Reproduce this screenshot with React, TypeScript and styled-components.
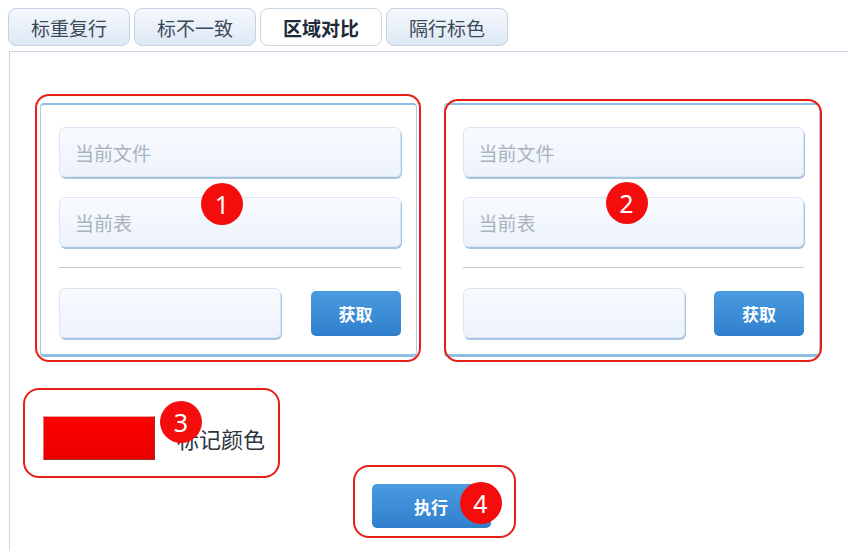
import * as React from 'react';
import styled, { createGlobalStyle } from 'styled-components';

const GlobalStyle = createGlobalStyle`
  html, body {
    margin: 0;
    padding: 0;
    overflow: hidden;
    background: #fff;
    font-family: "Noto Sans CJK SC", "Noto Sans", sans-serif;
  }
`;

const Page = styled.div`
  padding-top: 8px;
  height: 551px;
  box-sizing: border-box;
`;

const TabBar = styled.div`
  display: flex;
  gap: 4px;
  padding-left: 8px;
`;

const Tab = styled.div<{ $active?: boolean }>`
  width: 122px;
  height: 38px;
  box-sizing: border-box;
  display: flex;
  align-items: center;
  justify-content: center;
  border: 1px solid ${(p) => (p.$active ? '#cad8e6' : '#c3d3e5')};
  border-radius: 8px;
  background: ${(p) => (p.$active ? '#fff' : 'linear-gradient(180deg, #f5f8fc 0%, #dde8f4 100%)')};
  color: ${(p) => (p.$active ? '#1e2a38' : '#3b4a5a')};
  font-size: 19px;
  font-weight: ${(p) => (p.$active ? 700 : 400)};
`;

const Panel = styled.div`
  margin: 5px 0 0 9px;
  width: 844px;
  height: 520px;
  box-sizing: border-box;
  border: 1px solid #c8d6e6;
  padding: 51px 32px 0 30px;
`;

const CardRow = styled.div`
  display: flex;
  gap: 27px;
`;

const Card = styled.div`
  position: relative;
  flex: 1;
  background: #fff;
  border: 1px solid #a9cbe8;
  border-top: 2px solid #8fbde3;
  border-bottom: 3px solid #8fbde3;
  border-radius: 4px;
  padding: 22px 15px 16px 18px;
`;

const Stack = styled.div`
  display: flex;
  flex-direction: column;
  gap: 20px;
`;

const Field = styled.input<{ $width?: number }>`
  width: ${(p) => (p.$width ? `${p.$width}px` : '100%')};
  height: 50px;
  box-sizing: border-box;
  border: 1px solid #dce6f3;
  border-radius: 6px;
  background: linear-gradient(180deg, #f8fafe 0%, #edf3fc 100%);
  box-shadow: 1px 2px 0 #a8c4e3;
  padding: 0 15px;
  font-family: inherit;
  font-size: 19px;
  color: #333;
  outline: none;

  &::placeholder {
    color: #a9b3bd;
  }
`;

const Divider = styled.div`
  height: 1px;
  background: #c9c9c9;
  margin: 20px 0;
`;

const BottomRow = styled.div`
  display: flex;
  align-items: center;
  justify-content: space-between;
`;

const BlueButton = styled.button<{ $w: number; $h: number }>`
  display: block;
  width: ${(p) => p.$w}px;
  height: ${(p) => p.$h}px;
  border: none;
  border-radius: 5px;
  background: linear-gradient(180deg, #4b9be0 0%, #2f7fcd 100%);
  color: #fff;
  font-family: inherit;
  font-size: 17px;
  font-weight: 700;
  padding: 0;
  cursor: pointer;
`;

const ColorRow = styled.div`
  position: relative;
  display: flex;
  width: fit-content;
  align-items: center;
  gap: 22px;
  margin: 59px 0 0 3px;
`;

const Swatch = styled.div`
  width: 112px;
  height: 44px;
  box-sizing: border-box;
  background: linear-gradient(180deg, #ff0000 0%, #ec0000 100%);
  border: 1px solid #9a3030;
  border-top-color: #f0a0a0;
  border-left-color: #e07a7a;
`;

const Label = styled.span`
  font-size: 22px;
  color: #2b3440;
`;

const ExecRow = styled.div`
  display: flex;
  justify-content: center;
  margin-top: 24px;
  padding-left: 2px;
`;

const ExecWrap = styled.div`
  position: relative;
`;

const Outline = styled.div<{ $t: number; $r: number; $b: number; $l: number; $radius?: number }>`
  position: absolute;
  top: ${(p) => p.$t}px;
  right: ${(p) => p.$r}px;
  bottom: ${(p) => p.$b}px;
  left: ${(p) => p.$l}px;
  border: 2.5px solid #e61e16;
  border-radius: ${(p) => p.$radius ?? 14}px;
  pointer-events: none;
`;

const Badge = styled.div<{ $x: number; $y: number }>`
  position: absolute;
  left: ${(p) => p.$x}px;
  top: ${(p) => p.$y}px;
  width: 42px;
  height: 42px;
  border-radius: 50%;
  background: #f50d0d;
  color: #fff;
  display: flex;
  align-items: center;
  justify-content: center;
  font-family: "Noto Sans", "DejaVu Sans", sans-serif;
  font-size: 25px;
  line-height: 1;
  z-index: 2;
  pointer-events: none;
`;

const tabs = ['标重复行', '标不一致', '区域对比', '隔行标色'];

interface IAreaCard {
  no: number;
  outline: { t: number; r: number; b: number; l: number };
  badge: { x: number; y: number };
}

const AreaCard: React.FC<IAreaCard> = ({ no, outline, badge }) => (
  <Card>
    <Stack>
      <Field placeholder="当前文件" />
      <Field placeholder="当前表" />
    </Stack>
    <Divider />
    <BottomRow>
      <Field $width={222} />
      <BlueButton $w={90} $h={45}>获取</BlueButton>
    </BottomRow>
    <Outline $t={outline.t} $r={outline.r} $b={outline.b} $l={outline.l} />
    <Badge $x={badge.x} $y={badge.y}>{no}</Badge>
  </Card>
);

const App: React.FC = () => (
  <>
    <GlobalStyle />
    <Page>
      <TabBar>
        {tabs.map((t, i) => (
          <Tab key={t} $active={i === 2}>
            {t}
          </Tab>
        ))}
      </TabBar>
      <Panel>
        <CardRow>
          <AreaCard no={1} outline={{ t: -11, r: -5, b: -8, l: -6 }} badge={{ x: 160, y: 78 }} />
          <AreaCard no={2} outline={{ t: -6, r: -3, b: -8, l: -1 }} badge={{ x: 161, y: 77 }} />
        </CardRow>
        <ColorRow>
          <Swatch />
          <Label>标记颜色</Label>
          <Outline $t={-28} $r={-15} $b={-18} $l={-20} $radius={16} />
          <Badge $x={117} $y={-15}>3</Badge>
        </ColorRow>
        <ExecRow>
          <ExecWrap>
            <BlueButton $w={119} $h={44}>执行</BlueButton>
            <Outline $t={-19} $r={-25} $b={-10} $l={-19} $radius={16} />
            <Badge $x={88} $y={-2}>4</Badge>
          </ExecWrap>
        </ExecRow>
      </Panel>
    </Page>
  </>
);

export default App;
